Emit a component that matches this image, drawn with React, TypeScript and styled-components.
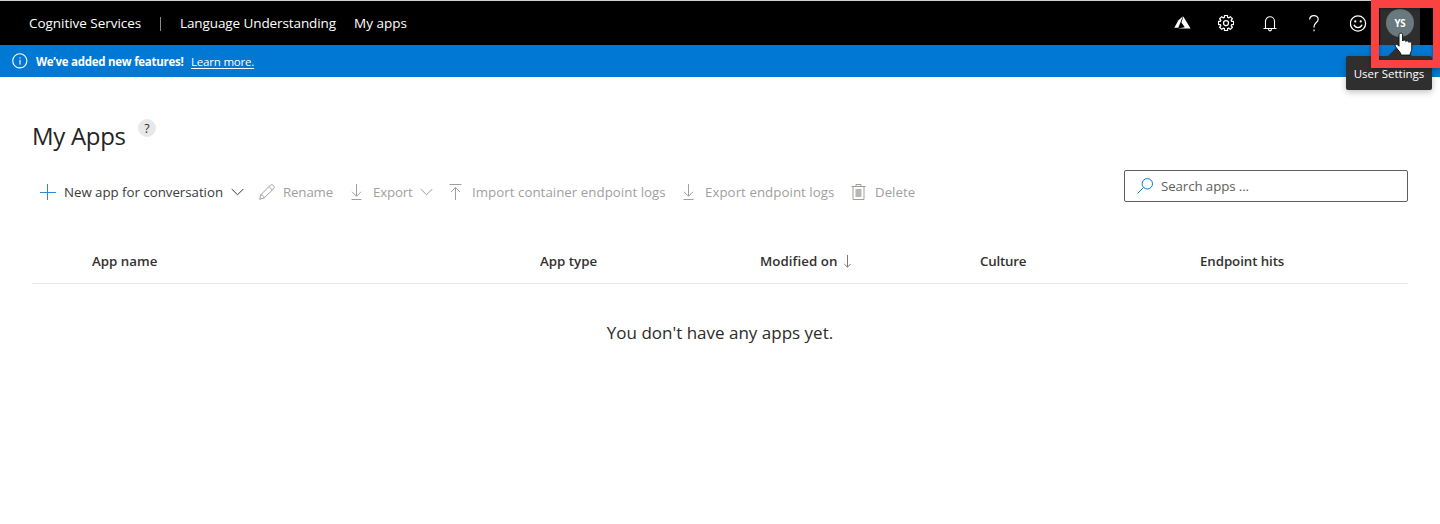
import React from 'react';
import styled, { createGlobalStyle } from 'styled-components';

const GlobalStyle = createGlobalStyle`
  * { box-sizing: border-box; }
  body {
    margin: 0;
    background: #fff;
    color: #323130;
    font-family: 'Open Sans', 'Noto Sans', sans-serif;
    font-size: 13.3px;
  }
`;

const Page = styled.div`
  position: relative;
  height: 524px;
  overflow: hidden;
`;

const Text = styled.span<{ $w: number; $ls?: number }>`
  flex: none;
  width: ${(p) => p.$w}px;
  letter-spacing: ${(p) => p.$ls ?? 0}px;
  white-space: nowrap;
`;

const TopBar = styled.header`
  display: flex;
  align-items: center;
  height: 45px;
  padding-left: 29px;
  border-top: 1px solid #d0d0d0;
  background: #000;
  color: #fff;
  font-size: 13.5px;
`;

const Divider = styled.span`
  width: 1px;
  height: 14px;
  margin: 1px 19px 0;
  background: #8a8a8a;
`;

const TopLinks = styled.nav`
  display: flex;
  gap: 18px;
`;

const TopActions = styled.div`
  display: flex;
  align-items: center;
  margin-left: auto;
  height: 100%;
`;

const ActionSlot = styled.span`
  display: flex;
  justify-content: center;
  width: 44px;
`;

const UserTile = styled.div`
  display: flex;
  align-items: center;
  justify-content: center;
  width: 40px;
  height: 100%;
  margin: 0 20px 0 0;
  background: #2f2e2e;
`;

const Avatar = styled.span`
  display: flex;
  align-items: center;
  justify-content: center;
  width: 28px;
  height: 28px;
  border-radius: 50%;
  background: #69797e;
  font-size: 9.7px;
  font-weight: 700;
  letter-spacing: -0.3px;
`;

const Banner = styled.div`
  display: flex;
  align-items: center;
  height: 32px;
  padding: 0 0 0 12px;
  background: #0078d4;
  color: #fff;
  font-size: 11.5px;
`;

const BannerMessage = styled(Text)`
  margin: 0 7px 0 8px;
  font-weight: 700;
`;

const BannerLink = styled.a`
  letter-spacing: -0.2px;
  text-decoration: underline;
  text-underline-offset: 2px;
`;

const Content = styled.main`
  padding: 42px 32px 0;
`;

const TitleRow = styled.div`
  display: flex;
  align-items: flex-start;
  height: 51px;
`;

const Title = styled.h1`
  width: 106px;
  margin: 0;
  font-size: 24px;
  line-height: 34px;
  font-weight: 400;
  letter-spacing: -0.3px;
  color: #252423;
  white-space: nowrap;
`;

const HelpBadge = styled.span`
  display: flex;
  align-items: center;
  justify-content: center;
  width: 18px;
  height: 18px;
  border-radius: 50%;
  background: #e8e8e8;
  font-size: 12.5px;
`;

const ToolRow = styled.div`
  display: flex;
  justify-content: space-between;
  height: 44px;
`;

const Commands = styled.div`
  display: flex;
  align-items: center;
  height: 44px;
  padding-left: 8px;
`;

const Command = styled.button<{ $active?: boolean; $w: number; $gap?: number }>`
  display: flex;
  align-items: center;
  flex: none;
  width: ${(p) => p.$w}px;
  padding: 0;
  border: 0;
  background: none;
  font: inherit;
  text-align: left;
  color: ${(p) => (p.$active ? '#3b3a39' : '#a19f9d')};

  > svg:first-child { margin-right: ${(p) => p.$gap ?? 9}px; }
  svg { flex: none; }
`;

const SearchBox = styled.div`
  display: flex;
  align-items: center;
  gap: 8px;
  width: 284px;
  height: 32px;
  padding-left: 12px;
  border: 1px solid #605e5c;
  border-radius: 2px;
  color: #605e5c;
`;

const TableHead = styled.div`
  display: grid;
  grid-template-columns: 448px 220px 220px 220px 1fr;
  align-items: center;
  height: 45px;
  margin-top: 25px;
  padding-left: 60px;
  border-bottom: 1px solid #e6e6e6;
  font-weight: 600;
`;

const HeadCell = styled.div`
  display: flex;
  align-items: center;
  gap: 5px;
`;

const Empty = styled.p`
  margin: 36px 0 0;
  text-align: center;
  font-size: 17px;
  font-weight: 400;
  line-height: 26px;
  color: #2c2b2a;
`;

const Tooltip = styled.div`
  position: absolute;
  left: 1346px;
  top: 56px;
  width: 86px;
  height: 34px;
  border-radius: 2px;
  background: #302f2f;
  box-shadow: 0 2px 6px rgba(0, 0, 0, 0.25);

  &::before {
    content: '';
    position: absolute;
    left: 42px;
    top: -12px;
    border: 12px solid transparent;
    border-top: 0;
    border-bottom-color: #302f2f;
  }
`;

const TooltipText = styled.span`
  position: absolute;
  left: 1346px;
  top: 56px;
  width: 86px;
  line-height: 35px;
  text-align: center;
  color: #fff;
  font-size: 11.5px;
  white-space: nowrap;
`;

const Highlight = styled.div`
  position: absolute;
  left: 1371px;
  top: 0;
  width: 70px;
  height: 68px;
  border: 8px solid #fb4243;
  box-shadow: 0 1px 4px rgba(0, 0, 0, 0.35), inset 0 1px 3px rgba(0, 0, 0, 0.35);
`;

const Pointer = styled.svg`
  position: absolute;
  left: 1394px;
  top: 32px;
`;

interface StrokeProps {
  d: string;
  w?: number;
  h?: number;
  c?: string;
  sw?: number;
}

const Stroke = ({ d, w = 16, h = 16, c = 'currentColor', sw = 1 }: StrokeProps) => (
  <svg width={w} height={h} viewBox={`0 0 ${w} ${h}`} fill="none" stroke={c} strokeWidth={sw}>
    <path d={d} />
  </svg>
);

const Chevron = () => <Stroke w={13} h={8} d="M.7 1l5.8 5.8L12.3 1" />;
const Download = () => <Stroke d="M8.5 0v12M4 7.8l4.5 4.5L13 7.8M3.5 15.5h10" />;
const Upload = () => <Stroke d="M8.5 16V3.5M4 8l4.5-4.5L13 8M2.5.5h12" />;

const AzureIcon = () => (
  <svg width="17" height="14" viewBox="0 0 17 14" fill="#fff">
    <path d="M8.9.2L4.4 4.2.3 11.8h4z" />
    <path d="M9.3.6L7.4 6.6l3.4 4.6-6.7 1.4h12.5z" />
  </svg>
);

const GearIcon = () => {
  const points: string[] = [];
  for (let i = 0; i < 8; i++) {
    const a = (i * Math.PI) / 4;
    [[-0.27, 5.9], [-0.2, 7.7], [0.2, 7.7], [0.27, 5.9]].forEach(([o, r]) => {
      points.push(`${(8 + r * Math.sin(a + o)).toFixed(2)},${(8 - r * Math.cos(a + o)).toFixed(2)}`);
    });
  }
  return (
    <svg width="16" height="16" viewBox="0 0 16 16" fill="none" stroke="#fff" strokeWidth="1.25" strokeLinejoin="round">
      <polygon points={points.join(' ')} />
      <circle cx="8" cy="8" r="2.5" />
    </svg>
  );
};

const SmileIcon = () => (
  <svg width="17" height="17" viewBox="0 0 17 17" fill="none" stroke="#fff" strokeWidth="1.3">
    <circle cx="8" cy="8.5" r="7.6" />
    <path d="M4 9.8c1.5 3.8 6.5 3.8 8 0" />
    <circle cx="5.3" cy="6.4" r="1.1" fill="#fff" stroke="none" />
    <circle cx="10.7" cy="6.4" r="1.1" fill="#fff" stroke="none" />
  </svg>
);

const InfoIcon = () => (
  <svg width="16" height="16" viewBox="0 0 16 16" fill="none" stroke="#fff">
    <circle cx="7.8" cy="7.8" r="7.1" strokeWidth="1.1" />
    <path d="M8 6.8v4.7M8 4.3v1.3" strokeWidth="1.1" />
  </svg>
);

const TrashIcon = () => (
  <svg width="15" height="16" viewBox="0 0 15 16" fill="none" stroke="currentColor">
    <path d="M.5 2.5h14M5 2.5v-2h5v2M2 2.5v13h11v-13" />
    <path d="M4.5 5h6v8h-6z" fill="currentColor" stroke="none" opacity=".75" />
  </svg>
);

export default function App() {
  return (
    <Page>
      <GlobalStyle />
      <TopBar>
        <Text $w={112} $ls={-0.04}>Cognitive Services</Text>
        <Divider />
        <TopLinks>
          <Text $w={156} $ls={-0.1}>Language Understanding</Text>
          <Text $w={54}>My apps</Text>
        </TopLinks>
        <TopActions>
          <ActionSlot><AzureIcon /></ActionSlot>
          <ActionSlot><GearIcon /></ActionSlot>
          <ActionSlot><Stroke w={14} h={17} c="#fff" sw={1.1} d="M2.5 13.5V6.2a4.5 4.5 0 0 1 9 0v7.3M.5 13.5h13M5.5 14c0 2.5 3 2.5 3 0" /></ActionSlot>
          <ActionSlot><Stroke w={10} h={17} c="#fff" sw={1.2} d="M.7 4.6C.7-.6 9.2-.6 9.2 4.2c0 3.4-4.2 3.7-4.2 7.2v1M5 14.5v1.7" /></ActionSlot>
          <ActionSlot><SmileIcon /></ActionSlot>
          <UserTile><Avatar>YS</Avatar></UserTile>
        </TopActions>
      </TopBar>
      <Banner>
        <InfoIcon />
        <BannerMessage $w={148} $ls={-0.27}>We’ve added new features!</BannerMessage>
        <BannerLink>Learn more.</BannerLink>
      </Banner>
      <Content>
        <TitleRow>
          <Title>My Apps</Title>
          <HelpBadge>?</HelpBadge>
        </TitleRow>
        <ToolRow>
          <Commands>
            <Command $active $w={219} $gap={7}>
              <Stroke w={17} h={16} c="#2b88d8" d="M0 8.5h16M7.5 0v16" />
              <Text $w={167} $ls={-0.03}>New app for conversation</Text>
              <Chevron />
            </Command>
            <Command $w={89} $gap={8}>
              <Stroke d="M.7 15.3l1.2-4.6L11.7.9c1.5-1.3 4.6 1.8 3.3 3.3L5.2 14zM1.9 10.7c1.8.2 3.1 1.5 3.3 3.3M10 2.6L13.4 6" />
              <Text $w={50} $ls={-0.15}>Rename</Text>
            </Command>
            <Command $w={99}>
              <Download />
              <Text $w={47} $ls={-0.2}>Export</Text>
              <Chevron />
            </Command>
            <Command $w={233}>
              <Upload />
              <Text $w={194} $ls={0.03}>Import container endpoint logs</Text>
            </Command>
            <Command $w={171}>
              <Download />
              <Text $w={130} $ls={0.04}>Export endpoint logs</Text>
            </Command>
            <Command $w={66}>
              <TrashIcon />
              <Text $w={40}>Delete</Text>
            </Command>
          </Commands>
          <SearchBox>
            <Stroke c="#0078d4" d="M15.5 5.8a5.2 5.2 0 1 1-10.4 0a5.2 5.2 0 0 1 10.4 0M6.6 9.5L.5 15.5" />
            <Text $w={90} $ls={-0.1}>Search apps ...</Text>
          </SearchBox>
        </ToolRow>
        <TableHead>
          <HeadCell>App name</HeadCell>
          <HeadCell>App type</HeadCell>
          <HeadCell>
            <Text $w={79} $ls={0.06}>Modified on</Text>
            <Stroke w={8} h={13} c="#797775" d="M3.5 0v12M.3 9l3.2 3.2L6.7 9" />
          </HeadCell>
          <HeadCell><Text $w={48} $ls={-0.2}>Culture</Text></HeadCell>
          <HeadCell><Text $w={90} $ls={-0.08}>Endpoint hits</Text></HeadCell>
        </TableHead>
        <Empty>You don't have any apps yet.</Empty>
      </Content>
      <Tooltip />
      <Highlight />
      <TooltipText>User Settings</TooltipText>
      <Pointer width="20" height="25" viewBox="0 0 20 25" fill="#fff" stroke="#111" strokeWidth="1">
        <path d="M5 3c0-2.4 3.6-2.4 3.6 0v6c.6-1.5 3-1.2 3.2.5.8-1.2 2.8-.7 3 .8 1-1 3-.2 3 1.6v5.2c0 2.2-1.5 3.2-1.8 6H7.2c-.5-2.7-3.5-5.3-5.6-8.2-1.2-2 .8-3.5 2.2-2L5 14.2z" />
      </Pointer>
    </Page>
  );
}
